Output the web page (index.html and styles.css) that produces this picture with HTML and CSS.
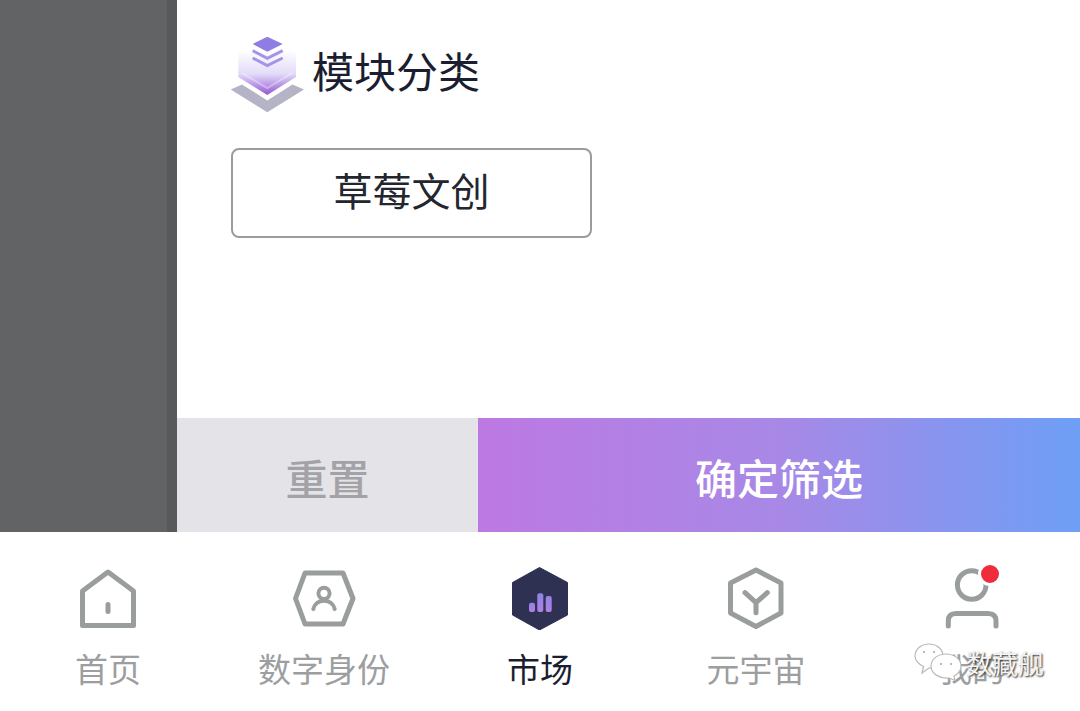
FILE: index.html
```html
<!DOCTYPE html>
<html lang="zh-CN">
<head>
    <meta charset="UTF-8">
    <meta name="viewport" content="width=device-width, initial-scale=1.0">
    <link rel="stylesheet" href="styles.css">
</head>
<body>
    <div class="screen">
        <div class="sheet-area">
            <div class="scrim"></div>
            <div class="panel">
                <div class="panel-body">
                    <div class="section-title">
                        <svg class="section-icon" width="75" height="78" viewBox="0 0 75 78">
                            <defs>
                                <linearGradient id="cubeFill" x1="0" y1="0" x2="0" y2="1">
                                    <stop offset="0.2" stop-color="#ffffff"/>
                                    <stop offset="0.62" stop-color="#e3dcf9"/>
                                    <stop offset="1" stop-color="#9458d4"/>
                                </linearGradient>
                            </defs>
                            <polygon points="8.3,18 37.3,3 66,18 66,41 37.3,59 8.3,41" fill="url(#cubeFill)"/>
                            <polyline points="12,37 37.3,52 62,37" fill="none" stroke="#ffffff" stroke-opacity="0.35" stroke-width="2"/>
                            <polygon points="0.7,53.5 12,48.5 37.3,64.5 62.5,48.5 74,53.5 37.3,76.3" fill="#b5b3c6"/>
                            <polygon points="37.3,0.7 52.7,8 37.3,15.7 22.7,8" fill="#8f7de3"/>
                            <polyline points="22.7,14.7 37.3,22.3 52.7,14.7" fill="none" stroke="#a593e6" stroke-width="3"/>
                            <polyline points="22.7,22 37.3,29.6 52.7,22" fill="none" stroke="#a593e6" stroke-width="3"/>
                        </svg>
                        <span>模块分类</span>
                    </div>
                    <button class="tag" type="button">草莓文创</button>
                </div>
                <div class="panel-footer">
                    <button class="btn-reset" type="button">重置</button>
                    <button class="btn-confirm" type="button">确定筛选</button>
                </div>
            </div>
        </div>

        <nav class="tabbar">
            <div class="tab">
                <svg width="64" height="64" viewBox="0 0 64 64" fill="none" stroke="#9a9d9e" stroke-width="5" stroke-linejoin="round" stroke-linecap="round">
                    <path d="M6.5 25 L32 6 L57.5 25 V59.5 H6.5 Z"/>
                    <path d="M32 38.5 V45.5"/>
                </svg>
                <span>首页</span>
            </div>
            <div class="tab">
                <svg width="64" height="64" viewBox="0 0 64 64" fill="none" stroke="#9a9d9e" stroke-width="5" stroke-linejoin="round" stroke-linecap="round">
                    <path d="M3.5 32.5 L13 7 H51 L61 32.5 L51 58 H13 Z"/>
                    <circle cx="32" cy="27.3" r="5.6" stroke-width="4"/>
                    <path d="M21.3 43 C22.5 37.5 27 34.7 32 34.7 C37 34.7 41.5 37.5 42.7 43" stroke-width="4"/>
                </svg>
                <span>数字身份</span>
            </div>
            <div class="tab tab-active">
                <svg width="64" height="64" viewBox="0 0 64 64">
                    <defs>
                        <linearGradient id="barFill" x1="0" y1="0" x2="0" y2="1">
                            <stop offset="0" stop-color="#8f83e6"/>
                            <stop offset="1" stop-color="#b27fe4"/>
                        </linearGradient>
                    </defs>
                    <path d="M31.5 1.5 L59.5 16.5 V49 L31.5 64 L4.5 49 V16.5 Z" fill="#2f3153" stroke="#2f3153" stroke-width="1" stroke-linejoin="round"/>
                    <rect x="21" y="36.7" width="6" height="9.3" rx="2" fill="url(#barFill)"/>
                    <rect x="29.3" y="27.3" width="6" height="18.7" rx="2" fill="url(#barFill)"/>
                    <rect x="37.7" y="30" width="6" height="16" rx="2" fill="url(#barFill)"/>
                </svg>
                <span>市场</span>
            </div>
            <div class="tab">
                <svg width="64" height="64" viewBox="0 0 64 64" fill="none" stroke="#9a9d9e" stroke-width="5" stroke-linejoin="round" stroke-linecap="round">
                    <path d="M32 4 L57 17 V47 L32 60.5 L6.5 47 V17 Z"/>
                    <path d="M21 26.7 L32 36.7 L43.3 26.7 M32 36.7 V46.7"/>
                </svg>
                <span>元宇宙</span>
            </div>
            <div class="tab">
                <svg class="tab-icon-badge" width="64" height="64" viewBox="0 0 64 64" fill="none" stroke="#9a9d9e" stroke-width="5" stroke-linecap="round">
                    <circle cx="31.7" cy="19" r="14.3"/>
                    <path d="M8.3 60 V55 C8.3 50 11 47.5 16 47.5 H48 C53 47.5 56 50 56 55 V60"/>
                    <circle cx="50" cy="8" r="10.5" fill="#ee2c3c" stroke="#ffffff" stroke-width="3"/>
                </svg>
                <span>我的</span>
            </div>
        </nav>

        <div class="watermark">
            <svg width="50" height="40" viewBox="0 0 50 40" fill="#ffffff" stroke="#b9b9b9" stroke-width="1.2">
                <path d="M15 2 C23 2 29 7.5 29 14 C29 20.5 23 26 15 26 L8 31 L9.5 24.5 C4.5 22 1 18.5 1 14 C1 7.5 7 2 15 2 Z"/>
                <path d="M32 12 C40 12 47 17 47 24 C47 28.5 44 32 40 34 L41 38.5 L35.5 36 C26 37 17 32 17 24 C17 17 24 12 32 12 Z"/>
                <circle cx="10" cy="10" r="0.9" stroke="none" fill="#999999"/>
                <circle cx="20" cy="10" r="0.9" stroke="none" fill="#999999"/>
                <circle cx="27" cy="22" r="0.9" stroke="none" fill="#999999"/>
                <circle cx="37" cy="22" r="0.9" stroke="none" fill="#999999"/>
            </svg>
            <span>数藏舰</span>
        </div>
    </div>
</body>
</html>
```

FILE: styles.css
```css
* {
    box-sizing: border-box;
}
html, body {
    margin: 0;
    padding: 0;
    background: #fff;
}
body {
    font-family: "Noto Sans CJK SC", "Noto Sans", sans-serif;
}
.screen {
    position: relative;
    width: 1080px;
    height: 711px;
    overflow: hidden;
}
.sheet-area {
    display: flex;
    height: 532px;
}
.scrim {
    width: 177px;
    background: #626364;
    border-right: 10px solid #58595b;
}
.panel {
    flex: 1;
    display: flex;
    flex-direction: column;
    background: #fff;
}
.panel-body {
    flex: 1;
    padding: 36px 0 0 54px;
}
.section-title {
    display: flex;
    align-items: flex-start;
    font-size: 42px;
    line-height: 68px;
    color: #1b1e30;
}
.section-icon {
    margin-left: -1px;
    margin-right: 7px;
}
.tag {
    display: block;
    width: 361px;
    height: 90px;
    margin-top: 34px;
    padding: 0 0 8px;
    background: #fff;
    border: 2px solid #9c9c9c;
    border-radius: 8px;
    font-family: inherit;
    font-size: 39px;
    color: #23262f;
}
.panel-footer {
    display: flex;
    height: 114px;
}
.panel-footer button {
    border: none;
    padding: 2px 0 0;
    font-family: inherit;
    font-size: 42px;
    font-weight: 500;
}
.btn-reset {
    width: 301px;
    background: #e4e4e8;
    color: #a3a3a7;
}
.btn-confirm {
    flex: 1;
    background: linear-gradient(90deg, #bd79e3 0%, #a888e6 50%, #6e9ff6 100%);
    color: #fff;
}
.tabbar {
    display: grid;
    grid-template-columns: repeat(5, 1fr);
    height: 179px;
    background: #fff;
}
.tab {
    display: flex;
    flex-direction: column;
    align-items: center;
    padding-top: 34px;
    font-size: 33px;
    line-height: 44px;
    color: #9c9ea0;
}
.tab span {
    margin-top: 16px;
}
.tab-active {
    color: #1b1e30;
}
.tab-icon-badge {
    overflow: visible;
}
.watermark {
    position: absolute;
    left: 914px;
    top: 642px;
    display: flex;
    align-items: flex-start;
}
.watermark svg {
    margin-right: 2px;
}
.watermark span {
    font-size: 26px;
    line-height: 42px;
    color: #f4f4f4;
    text-shadow: 1px 1px 2px #222;
}
```
